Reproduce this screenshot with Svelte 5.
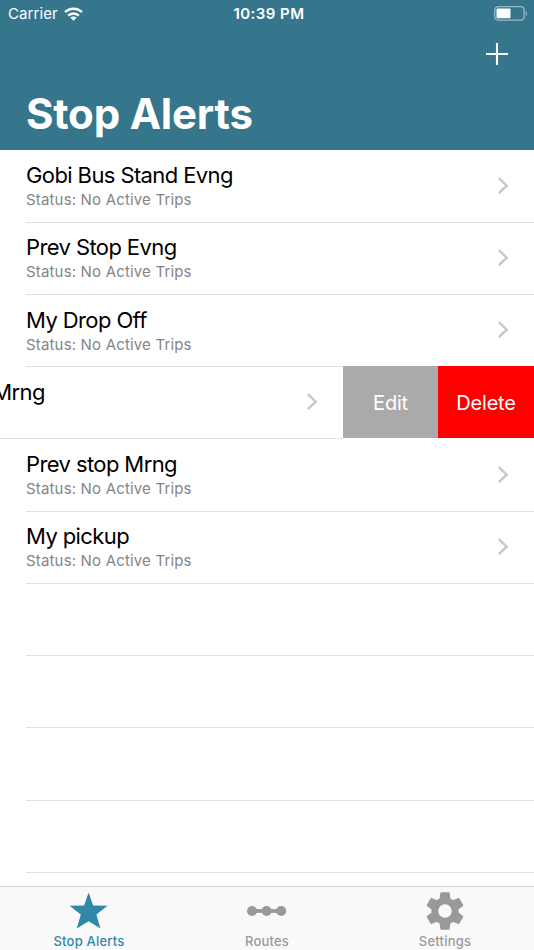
<script lang="ts">
  interface StopAlert {
    name: string;
    status: string;
    open?: boolean;
  }

  const alerts: StopAlert[] = [
    { name: "Gobi Bus Stand Evng", status: "Status: No Active Trips" },
    { name: "Prev Stop Evng", status: "Status: No Active Trips" },
    { name: "My Drop Off", status: "Status: No Active Trips" },
    { name: "Gobi Bus Stand Mrng", status: "Status: No Active Trips", open: true },
    { name: "Prev stop Mrng", status: "Status: No Active Trips" },
    { name: "My pickup", status: "Status: No Active Trips" },
  ];

  const emptyRows = [1, 2, 3, 4, 5];
  const teeth = [0, 60, 120, 180, 240, 300];

  let activeTab = $state("alerts");
</script>

<div class="screen">
  <header>
    <div class="statusbar">
      <div class="carrier">
        <span>Carrier</span>
        <svg width="19" height="14" viewBox="0 0 19 14">
          <g fill="none" stroke="#fff" stroke-width="2.5">
            <path d="M1.1 5.1a11.9 11.9 0 0 1 16.8 0" />
            <path d="M4.2 8.6a7.5 7.5 0 0 1 10.6 0" />
          </g>
          <path d="M9.5 13.8 6.4 10.7a4.4 4.4 0 0 1 6.2 0z" fill="#fff" />
        </svg>
      </div>
      <div class="time">10:39 PM</div>
      <svg class="battery" width="34" height="16" viewBox="0 0 34 16">
        <rect x="0.7" y="0.7" width="29.4" height="13.4" rx="3.4" fill="none" stroke="#fff" stroke-opacity="0.5" stroke-width="1.3" />
        <rect x="2.5" y="2.6" width="14" height="9.6" rx="1" fill="#fff" />
        <path d="M31.8 5v5c1.6-.7 1.6-4.3 0-5z" fill="#fff" fill-opacity="0.5" />
      </svg>
    </div>
    <div class="toolbar">
      <button class="add" aria-label="Add alert">
        <svg width="24" height="24" viewBox="0 0 24 24">
          <path d="M12 1v22M1 12h22" stroke="#fff" stroke-width="2.1" />
        </svg>
      </button>
    </div>
    <h1>Stop Alerts</h1>
  </header>

  <main>
    {#each alerts as alert}
      <div class="row" class:open={alert.open}>
        <div class="cell">
          <div class="text">
            <div class="name">{alert.name}</div>
            <div class="status">{alert.status}</div>
          </div>
          <svg class="chevron" width="12" height="18" viewBox="0 0 12 18">
            <path d="M1.8 1.2 9.7 8.7 1.8 16.2" fill="none" stroke="#c7c7cc" stroke-width="2.4" />
          </svg>
        </div>
        {#if alert.open}
          <div class="actions">
            <button class="edit">Edit</button>
            <button class="delete">Delete</button>
          </div>
        {/if}
      </div>
    {/each}
    {#each emptyRows as n (n)}
      <div class="row"><div class="cell"></div></div>
    {/each}
  </main>

  <nav>
    <button class:active={activeTab === "alerts"} onclick={() => (activeTab = "alerts")}>
      <svg width="40" height="40" viewBox="0 0 40 40">
        <path d="M19.6 1.5 24.1 14.6 38.6 14.8 27.4 23.6 31.4 37.5 19.6 30.2 7.8 37.5 11.8 23.6.6 14.8 15.1 14.6z" fill="currentColor" />
      </svg>
      <span>Stop Alerts</span>
    </button>
    <button class:active={activeTab === "routes"} onclick={() => (activeTab = "routes")}>
      <svg width="40" height="40" viewBox="0 0 40 40">
        <path d="M5 20h29" stroke="currentColor" stroke-width="3.8" />
        <g fill="currentColor">
          <circle cx="5" cy="20" r="5" />
          <circle cx="19.6" cy="20" r="5" />
          <circle cx="34.2" cy="20" r="5" />
        </g>
      </svg>
      <span>Routes</span>
    </button>
    <button class:active={activeTab === "settings"} onclick={() => (activeTab = "settings")}>
      <svg width="40" height="40" viewBox="0 0 40 40">
        <g fill="currentColor">
          {#each teeth as angle}
            <path d="M15.4 1.8q.1-.6.7-.6h7.8q.6 0 .7.6L25.6 9h-11.2z" transform="rotate({angle} 20 20)" />
          {/each}
        </g>
        <circle cx="20" cy="20" r="10.2" fill="none" stroke="currentColor" stroke-width="6.8" />
      </svg>
      <span>Settings</span>
    </button>
  </nav>
</div>

<style>
  :global(body) {
    margin: 0;
  }

  .screen {
    display: flex;
    flex-direction: column;
    width: 534px;
    height: 950px;
    overflow: hidden;
    background: #fff;
    font-family: Inter, "Liberation Sans", sans-serif;
  }

  button {
    padding: 0;
    border: none;
    background: none;
    font-family: inherit;
    cursor: pointer;
  }

  svg {
    display: block;
  }

  header {
    box-sizing: border-box;
    flex: none;
    height: 150px;
    background: #35768d;
    color: #fff;
  }

  .statusbar {
    display: grid;
    grid-template-columns: 1fr auto 1fr;
    align-items: center;
    height: 27px;
    padding: 0 4px 0 8px;
  }

  .carrier {
    display: flex;
    align-items: center;
    gap: 6px;
    font-size: 15px;
    letter-spacing: 0.1px;
  }

  .time {
    font-size: 15px;
    font-weight: 600;
    letter-spacing: 0.45px;
  }

  .battery {
    justify-self: end;
    margin-right: 2px;
  }

  .toolbar {
    display: flex;
    justify-content: flex-end;
    align-items: center;
    height: 54px;
    padding-right: 25px;
  }

  h1 {
    margin: 8px 0 0 26px;
    font-size: 42px;
    line-height: 50px;
    font-weight: 700;
    letter-spacing: -0.2px;
  }

  main {
    flex: 1;
    min-height: 0;
    padding-top: 0.45px;
    overflow: hidden;
  }

  .row {
    display: flex;
    height: 72.25px;
  }

  .cell {
    box-sizing: border-box;
    display: flex;
    flex: none;
    justify-content: space-between;
    width: 508px;
    margin-left: 26px;
    padding-right: 25px;
    border-bottom: 1px solid #e2e2e4;
  }

  .text {
    padding-top: 10.6px;
    white-space: nowrap;
  }

  .name {
    font-size: 22px;
    line-height: 28px;
    letter-spacing: -0.6px;
    color: #000;
  }

  .status {
    font-size: 15px;
    line-height: 22px;
    letter-spacing: 0.17px;
    color: #858585;
  }

  .chevron {
    flex: none;
    align-self: center;
    margin-bottom: 1px;
  }

  .open .cell {
    width: 534px;
    margin-left: -191px;
    padding-left: 26px;
  }

  /* buttons cover the separator above the open row */
  .actions {
    display: grid;
    grid-template-columns: 95px 96px;
    flex: none;
    margin: -1px 0 1px;
  }

  .actions button {
    padding-top: 2px;
    color: #fff;
    font-size: 20px;
    letter-spacing: -0.2px;
  }

  .actions .edit {
    background: #aaa;
  }

  .actions .delete {
    background: #f00;
  }

  nav {
    box-sizing: border-box;
    display: grid;
    grid-template-columns: repeat(3, 178px);
    flex: none;
    height: 64px;
    border-top: 1px solid #d0d0d0;
    background: #f9f9f9;
  }

  nav button {
    display: flex;
    flex-direction: column;
    align-items: center;
    padding-top: 4px;
    color: #999;
  }

  nav .active {
    color: #2f88a8;
  }

  nav span {
    margin-top: 2px;
    font-size: 13px;
    line-height: 16px;
    font-weight: 500;
    letter-spacing: 0.2px;
  }
</style>
